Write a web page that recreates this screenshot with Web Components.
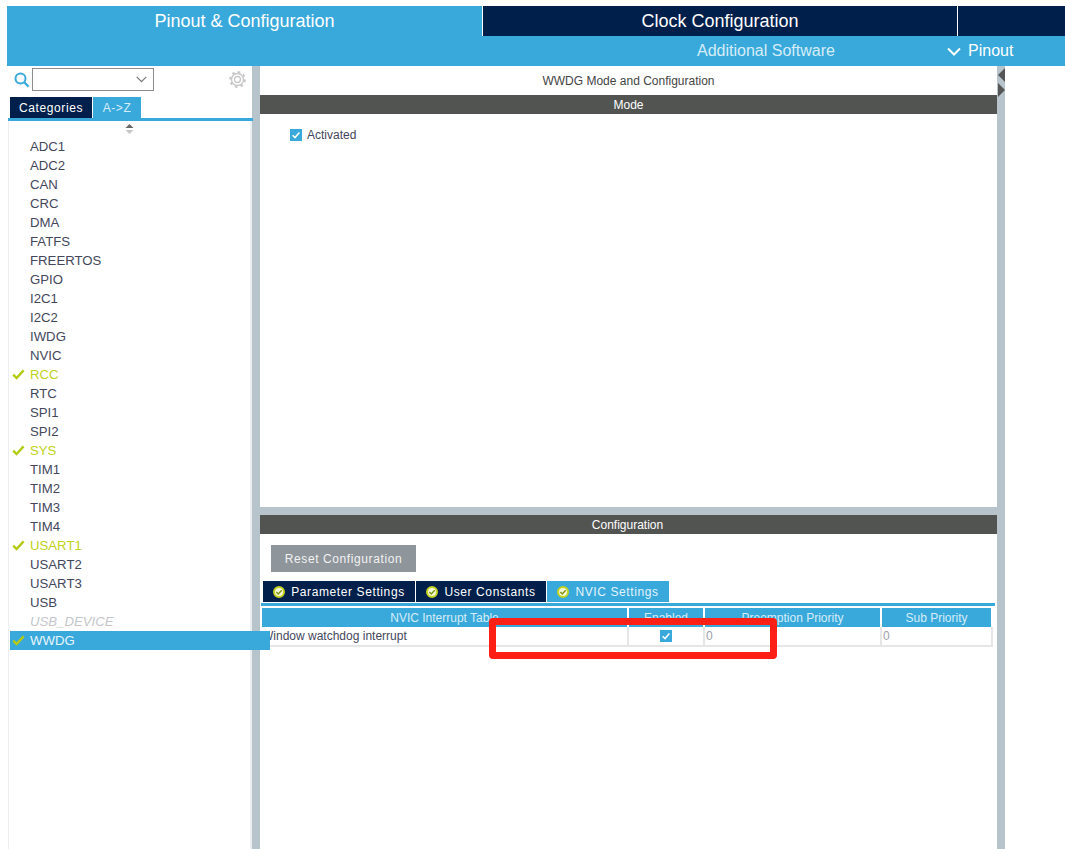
<!DOCTYPE html>
<html><head><meta charset="utf-8"><style>
html,body{margin:0;padding:0;height:849px;overflow:hidden;background:#fff;font-family:"Liberation Sans",Arial,sans-serif}
</style></head><body>
<cube-app></cube-app>
<script>
const def=(name,css,html,init)=>{customElements.define(name,class extends HTMLElement{
  connectedCallback(){ if(this.shadowRoot) return; const s=this.attachShadow({mode:'open'}); s.innerHTML='<style>'+css+'</style>'+(typeof html==='function'?html(this):html); if(init)init(s,this);}
});};
const CHECK='<svg width="12" height="12" viewBox="0 0 12 12"><rect width="12" height="12" fill="#39a9db"/><path d="M2.6 6.2 5 8.6 9.4 3.6" fill="none" stroke="#fff" stroke-width="1.5"/></svg>';

def('top-nav',`
:host{display:block;padding-left:7px;padding-top:6px;background:#fff;color:#fff}
.r1{display:flex;height:30px}
.t{display:flex;align-items:center;justify-content:center;font-size:18px}
.a{width:475px;background:#39a9db;color:#fff}
.b{width:474px;margin-left:1px;background:#011f4b;font-size:18px}
.c{flex:1;margin-left:1px;background:#011f4b}
.r2{height:30px;background:#39a9db;display:flex;align-items:center;font-size:16px;position:relative}
.add{margin-left:690px;width:240px;color:#d6edf8}
.pin{display:flex;align-items:center;gap:7px;margin-left:10px}
`,`<div class="r1"><div class="t a">Pinout &amp; Configuration</div><div class="t b">Clock Configuration</div><div class="c"></div></div>
<div class="r2"><span class="add">Additional Software</span><span class="pin"><svg width="14" height="9" viewBox="0 0 14 9"><path d="M1 1.5 7 7.5 13 1.5" fill="none" stroke="#fff" stroke-width="2"/></svg>Pinout</span></div>`);

def('ip-row',`
:host{display:flex;align-items:center;height:19px;font-size:13.2px;color:#44475c;padding-left:20px;position:relative;margin-left:1px;width:240px}
:host([ok]){color:#c0d21a}
:host([off]){color:#c4c6cc;font-style:italic}
:host([sel]){background:#39a9db;color:#e8f6fc}
svg{position:absolute;left:2px;top:4px}
`,h=>(h.hasAttribute('ok')?'<svg width="13" height="11" viewBox="0 0 13 11"><path d="M1.2 5.6 4.6 9 11.6 1.4" fill="none" stroke="#b4cb14" stroke-width="2.4"/></svg>':'')+'<slot></slot>');

def('side-panel',`
:host{display:block;width:245px;flex:none;background:#fff;position:relative}
.search{display:flex;align-items:flex-start;height:31px;padding-top:2px;box-sizing:border-box}
.lens{margin:4px 2px 0 7px}
.combo{width:122px;height:23px;box-sizing:border-box;border:1px solid #8c8c8c;display:flex;align-items:center;justify-content:flex-end;padding-right:6px}
.gear{margin:3px 0 0 75px}
.tabs{display:flex;height:21px;padding-left:3px;gap:1px;font-size:12px;letter-spacing:.6px;color:#fff}
.tabs div{display:flex;align-items:center;justify-content:center}
.t1{width:82px;background:#011f4b}.t2{width:48px;background:#39a9db;color:#d6edf8}
.line{height:3px;background:#39a9db;margin-left:1px;margin-right:-1px}
.list{border-left:1px solid #eceff1;border-right:2px solid #eceff1;margin-left:1px;height:728px;box-sizing:border-box;position:relative;margin-right:0}
.scroll{height:16px;display:flex;justify-content:center;padding-top:3px;box-sizing:border-box}
`,`<div class="search">
<svg class="lens" width="16" height="16" viewBox="0 0 16 16"><circle cx="6.5" cy="6.5" r="5" fill="none" stroke="#39a9db" stroke-width="2"/><path d="M10.2 10.2 14.6 14.6" stroke="#39a9db" stroke-width="2.2"/></svg>
<div class="combo"><svg width="11" height="7" viewBox="0 0 11 7"><path d="M.7.8 5.5 5.6 10.3.8" fill="none" stroke="#777" stroke-width="1.2"/></svg></div>
<svg class="gear" width="17" height="17" viewBox="0 0 17 17"><g fill="none" stroke="#c8c8c8"><circle cx="8.5" cy="8.5" r="3" stroke-width="1.3"/><circle cx="8.5" cy="8.5" r="6" stroke-width="1.4"/><circle cx="8.5" cy="8.5" r="7.4" stroke-width="2" stroke-dasharray="2.6 3.21"/></g></svg>
</div>
<div class="tabs"><div class="t1">Categories</div><div class="t2">A-&gt;Z</div></div>
<div class="line"></div>
<div class="list"><div class="scroll"><svg width="9" height="10" viewBox="0 0 9 10"><path d="M4.5 0 8.5 4H.5Z" fill="#666"/><path d="M.5 6H8.5L4.5 10Z" fill="#c6c6c6"/></svg></div><slot></slot></div>`);

def('section-bar',`
:host{display:flex;align-items:center;justify-content:center;height:19px;background:#525452;color:#fff;font-size:12px}
`,'<slot></slot>');

def('mode-panel',`
:host{display:block;height:441px;background:#fff;flex:none}
.title{height:29px;display:flex;align-items:center;justify-content:center;font-size:12px;color:#444}
.act{display:flex;align-items:center;gap:5px;margin:14px 0 0 30px;font-size:12px;color:#44475c}
svg{display:block}
`,`<div class="title">WWDG Mode and Configuration</div><section-bar>Mode</section-bar><div class="act">${CHECK}<span>Activated</span></div>`);

def('cfg-tab',`
:host{display:flex;align-items:center;justify-content:center;gap:6px;height:21px;background:#011f4b;color:#fff;font-size:12px;letter-spacing:.6px;box-sizing:border-box}
:host([on]){background:#39a9db;color:#e2f3fb}
svg{display:block;flex:none}
`,`<svg width="12" height="12" viewBox="0 0 12 12"><circle cx="6" cy="6" r="5" fill="#f4f7d8" stroke="#c2d21e" stroke-width="2"/><path d="M3.4 6 5.3 7.9 8.7 4.3" fill="none" stroke="#7f8f10" stroke-width="1.4"/></svg><slot></slot>`);

def('nvic-table',`
:host{display:block;margin:1px 3px 0 2px;width:732px}
.g{display:grid;grid-template-columns:367px 76px 177px 111px;font-size:12px}
.h{background:#39a9db;color:#d6edf8;height:19px;display:flex;align-items:center;justify-content:center;margin-right:2px;margin-top:1px}
.h:last-of-type{margin-right:0}
.c{height:20px;border-bottom:2px solid #e6e6e6;border-right:2px solid #e6e6e6;box-sizing:border-box;display:flex;align-items:center;color:#44475c;white-space:nowrap}
.n{color:#a0a0a8;padding-left:1px}
.m{justify-content:center}
`,`<div class="g"><div class="h">NVIC Interrupt Table</div><div class="h">Enabled</div><div class="h">Preemption Priority</div><div class="h">Sub Priority</div>
<div class="c">Window watchdog interrupt</div><div class="c m">${CHECK}</div><div class="c n">0</div><div class="c n">0</div></div>`);

def('config-panel',`
:host{display:block;flex:1;background:#fff;min-height:0;overflow:hidden}
.btn{margin:11px 0 0 11px;width:145px;height:27px;background:#8e959b;color:#f2f2f2;font-size:12px;letter-spacing:.6px;display:flex;align-items:center;justify-content:center}
.tabs{display:flex;gap:1px;margin:9px 0 0 3px}
.line{height:3px;background:#39a9db;margin:1px 2px 0 1px}
`,`<section-bar><span style="margin-right:2px">Configuration</span></section-bar>
<div class="btn">Reset Configuration</div>
<div class="tabs"><cfg-tab style="width:152px">Parameter Settings</cfg-tab><cfg-tab style="width:130px">User Constants</cfg-tab><cfg-tab on style="width:122px">NVIC Settings</cfg-tab></div>
<div class="line"></div>
<nvic-table></nvic-table>`);

def('red-mark',`
:host{position:absolute;left:489px;top:618px;width:288px;height:41px;box-sizing:border-box;border:7px solid #fe2015;border-radius:4px;pointer-events:none}
`,'');

def('cube-app',`
:host{display:flex;flex-direction:column;height:849px;position:relative;overflow:hidden}
.main{flex:1;display:flex;padding-left:7px;min-height:0}
.v{width:8px;background:#b8c4cc;flex:none}
.center{width:737px;flex:none;display:flex;flex-direction:column;min-height:0}
.h{height:8px;background:#b8c4cc;flex:none}
.right{width:8px;background:#b8c4cc;flex:none;position:relative}
.arr{position:absolute;left:1px}
`,`<top-nav></top-nav>
<div class="main">
<side-panel>
<ip-row>ADC1</ip-row><ip-row>ADC2</ip-row><ip-row>CAN</ip-row><ip-row>CRC</ip-row><ip-row>DMA</ip-row><ip-row>FATFS</ip-row><ip-row>FREERTOS</ip-row><ip-row>GPIO</ip-row><ip-row>I2C1</ip-row><ip-row>I2C2</ip-row><ip-row>IWDG</ip-row><ip-row>NVIC</ip-row><ip-row ok>RCC</ip-row><ip-row>RTC</ip-row><ip-row>SPI1</ip-row><ip-row>SPI2</ip-row><ip-row ok>SYS</ip-row><ip-row>TIM1</ip-row><ip-row>TIM2</ip-row><ip-row>TIM3</ip-row><ip-row>TIM4</ip-row><ip-row ok>USART1</ip-row><ip-row>USART2</ip-row><ip-row>USART3</ip-row><ip-row>USB</ip-row><ip-row off>USB_DEVICE</ip-row><ip-row ok sel>WWDG</ip-row>
</side-panel>
<div class="v"></div>
<div class="center"><mode-panel></mode-panel><div class="h"></div><config-panel></config-panel></div>
<div class="right"><svg class="arr" style="top:2px" width="7" height="14" viewBox="0 0 7 14"><path d="M7 0V14L0 7Z" fill="#555"/></svg><svg class="arr" style="top:17px" width="7" height="14" viewBox="0 0 7 14"><path d="M0 0V14L7 7Z" fill="#555"/></svg></div>
</div>
<red-mark></red-mark>`);
</script>
</body></html>
